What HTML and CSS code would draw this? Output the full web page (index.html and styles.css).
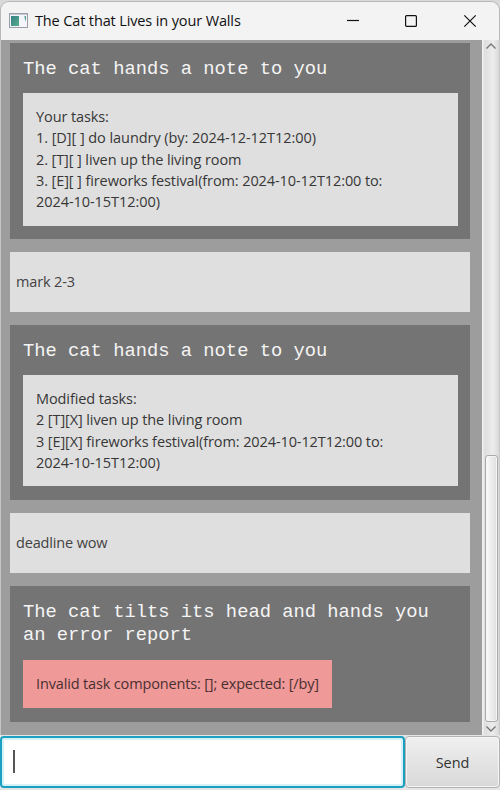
FILE: index.html
```html
<!DOCTYPE html>
<html lang="en">
<head>
<meta charset="utf-8">
<title>The Cat that Lives in your Walls</title>
<link rel="stylesheet" href="styles.css">
</head>
<body>
<div class="window">
  <header class="titlebar">
    <svg class="app-icon" width="20" height="16" viewBox="0 0 20 16"><defs><linearGradient id="g" x2="1" y2="1"><stop stop-color="#337f86"/><stop offset="1" stop-color="#57ad8c"/></linearGradient></defs><rect x=".5" y=".5" width="18" height="14" fill="#f4f5f8" stroke="#9b9eaa"/><path d="M1 1.5h17" stroke="#c7c9d3"/><rect x="2" y="3" width="8" height="10" fill="url(#g)"/><path d="M15.5 3H17v5.500c-1-1.500-1.500-3.500-1.500-5.500z" fill="#55a096"/></svg>
    <h1 class="title">The Cat that Lives in your Walls</h1>
    <div class="controls">
      <svg width="14" height="14" viewBox="0 0 14 14"><path d="M2 6.500h12"/></svg>
      <svg width="14" height="14" viewBox="0 0 14 14"><rect x="1.600" y="1.600" width="10.800" height="10.800" rx="1"/></svg>
      <svg width="14" height="14" viewBox="0 0 14 14"><path d="M1.300 1.300l11.400 11.400M12.700 1.300L1.300 12.700"/></svg>
    </div>
  </header>
  <main class="body">
    <section class="messages">
      <article class="reply">
        <h2>The cat hands a note to you</h2>
        <div class="note">
          <div>Your tasks:</div>
          <div class="loose">1. [D][ ] do laundry (by: 2024-12-12T12:00)</div>
          <div>2. [T][ ] liven up the living room</div>
          <div>3. [E][ ] fireworks festival(from: 2024-10-12T12:00 to:</div>
          <div class="loose">2024-10-15T12:00)</div>
        </div>
      </article>
      <div class="user">mark 2-3</div>
      <article class="reply">
        <h2>The cat hands a note to you</h2>
        <div class="note">
          <div>Modified tasks:</div>
          <div>2 [T][X] liven up the living room</div>
          <div>3 [E][X] fireworks festival(from: 2024-10-12T12:00 to:</div>
          <div class="loose">2024-10-15T12:00)</div>
        </div>
      </article>
      <div class="user">deadline wow</div>
      <article class="reply">
        <h2>The cat tilts its head and hands you<br>an error report</h2>
        <div class="note error"><div>Invalid task components: []; expected: [/by]</div></div>
      </article>
    </section>
    <aside class="scrollbar">
      <svg width="12" height="8" viewBox="0 0 12 8"><path d="M1.500 6.500L6 2l4.500 4.500"/></svg>
      <div class="track"><div class="thumb"></div></div>
      <svg width="12" height="8" viewBox="0 0 12 8"><path d="M1.500 1.500L6 6l4.500-4.500"/></svg>
    </aside>
  </main>
  <footer class="composer">
    <div class="input"><span class="caret"></span></div>
    <button class="send">Send</button>
  </footer>
</div>
</body>
</html>
```
FILE: styles.css
```css
* { box-sizing: border-box; }
body { margin: 0; background: #d9dad8; font-family: "Open Sans", sans-serif; }
.window { width: 500px; height: 790px; padding-top: 1px; display: flex; flex-direction: column; overflow: hidden; }
.titlebar { height: 39px; flex: none; display: flex; align-items: center; padding: 0 22px 0 8px; background: #f3f3f3; border: 1px solid #b5b9bb; border-bottom: 0; border-radius: 9px 9px 0 0; }
.app-icon { flex: none; }
.title { margin: 0 0 0 6px; font-size: 14.5px; font-weight: 400; line-height: 20px; letter-spacing: -.13px; color: #111; white-space: nowrap; }
.controls { display: flex; gap: 45px; margin-left: auto; }
.controls svg { fill: none; stroke: #111; stroke-width: 1.2; }
.body { height: 695px; flex: none; display: flex; border-left: 1px solid #c4c4c4; background: #9d9d9d; }
.messages { width: 481px; padding: 3px 12px 13px 9px; display: flex; flex-direction: column; gap: 13px; }
.reply { height: 196px; flex: none; background: #747474; padding: 15px 12px 0 13px; }
.reply:nth-child(3) { height: 175px; }
.reply:last-child { height: 136px; }
h2 { margin: 0 0 12px; font: 400 18.8px/23px "Liberation Mono", monospace; color: #f4f4f4; white-space: nowrap; }
.reply:last-child h2 { margin-bottom: 13px; }
.note { height: 133px; background: #dfdfdf; padding: 13px; color: #373737; font-size: 14.5px; line-height: 21.3px; letter-spacing: -.1px; white-space: nowrap; }
.reply:nth-child(3) .note { height: 111px; }
.loose { letter-spacing: -.06px; }
.reply .note.error { width: 309px; height: 48px; background: #ef9999; letter-spacing: -.15px; color: #4a3030; }
.user { height: 60px; flex: none; padding-left: 6px; background: #dfdfdf; color: #434343; font-size: 14.5px; line-height: 60px; letter-spacing: -.15px; }
.scrollbar { width: 18px; display: flex; flex-direction: column; align-items: center; padding: 2px 1px; background: linear-gradient(90deg, #f5f5f5 0, #dedede 15%, #ececec 60%, #ddd 90%, #c3c3c3); }
.scrollbar svg { flex: none; fill: none; stroke: #777; stroke-width: 1.4; }
.track { flex: 1; width: 13px; padding-top: 405px; }
.thumb { height: 267px; border: 1px solid #aaa; border-radius: 3px; background: linear-gradient(90deg, #fafafa, #dedede); box-shadow: inset 0 0 0 1px #f5f5f5; }
.composer { height: 55px; flex: none; display: flex; padding: 1px 0 2px; background: #e5e5e5; }
.input { width: 405px; border: 2px solid #1ba0c2; border-radius: 4px; background: #fff; box-shadow: inset 0 0 0 2px #d5f2f8; padding: 12px 0 0 11px; }
.caret { display: block; width: 2px; height: 23px; background: #555; }
.send { width: 95px; padding: 0; border: 1px solid #b2b2b2; border-radius: 4px; background: linear-gradient(#f0f0f0, #d8d8d8); box-shadow: inset 0 0 0 1px #f5f5f5; color: #333; font: 14.5px "Open Sans", sans-serif; letter-spacing: -.1px; }
```
